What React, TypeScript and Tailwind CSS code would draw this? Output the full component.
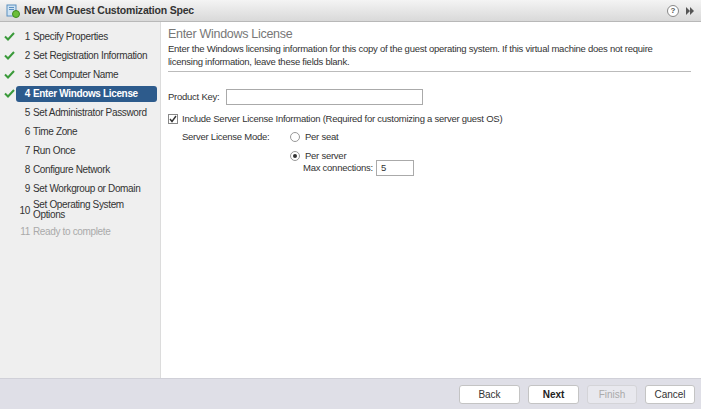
import React from "react";

const steps = [
  { n: "1", label: "Specify Properties", done: true },
  { n: "2", label: "Set Registration Information", done: true },
  { n: "3", label: "Set Computer Name", done: true },
  { n: "4", label: "Enter Windows License", done: true, active: true },
  { n: "5", label: "Set Administrator Password" },
  { n: "6", label: "Time Zone" },
  { n: "7", label: "Run Once" },
  { n: "8", label: "Configure Network" },
  { n: "9", label: "Set Workgroup or Domain" },
  { n: "10", label: "Set Operating System Options", two: true },
  { n: "11", label: "Ready to complete", disabled: true },
];

function Check() {
  return (
    <svg width="11" height="9" viewBox="0 0 11 9">
      <path d="M1 4.5 L4 7.5 L10 1" fill="none" stroke="#3a9a3a" strokeWidth="2" />
    </svg>
  );
}

export default function App() {
  return (
    <div className="w-[701px] h-[409px] flex flex-col overflow-hidden text-[#333]" style={{ fontFamily: '"Liberation Sans", Arial, sans-serif' }}>
      {/* title bar */}
      <div className="h-[22px] shrink-0 flex items-center justify-between pl-[6px] pr-[6px] bg-gradient-to-b from-[#f4f4f4] to-[#d9d9d9] border-b border-[#b8b8b8]">
        <div className="flex items-center gap-[4px]">
          <svg width="14" height="14" viewBox="0 0 14 14">
            <rect x="1" y="1" width="9" height="11" fill="#cfe3f3" stroke="#5b8fc0" />
            <rect x="3" y="3" width="5" height="1" fill="#5b8fc0" />
            <rect x="3" y="5" width="5" height="1" fill="#5b8fc0" />
            <circle cx="10" cy="10" r="3.5" fill="#6cbf3a" stroke="#3f8a1f" />
          </svg>
          <span className="text-[10.5px] font-bold text-[#333] tracking-[-0.2px]">New VM Guest Customization Spec</span>
        </div>
        <div className="flex items-center gap-[6px]">
          <div className="w-[12px] h-[12px] rounded-full border border-[#888] bg-white flex items-center justify-center text-[8px] font-bold text-[#555] leading-none">?</div>
          <svg width="10" height="8" viewBox="0 0 10 8">
            <path d="M1 0 L5 4 L1 8 Z M5 0 L9 4 L5 8 Z" fill="#555" />
          </svg>
        </div>
      </div>

      <div className="flex flex-1 min-h-0">
        {/* sidebar */}
        <div className="w-[161px] shrink-0 bg-[#efefef] border-r border-[#dcdcdc] pt-[5px] pl-[3px] pr-[3px] text-[10px] tracking-[-0.35px]">
          {steps.map((s) => (
            <div key={s.n} className={`flex items-center ${s.two ? "h-[24px]" : "h-[19px]"}`}>
              <div className="w-[13px] flex justify-center shrink-0">{s.done ? <Check /> : null}</div>
              <div
                className={`flex items-center flex-1 rounded-[3px] ${s.two ? "h-[24px]" : "h-[16px]"} ${s.two ? "pl-[1px]" : "pl-[4px]"} ${s.active ? "bg-[#2d5b8c] text-white font-bold" : s.disabled ? "text-[#aaa]" : "text-[#333]"}`}
              >
                <span className={`${s.two ? "w-[13px]" : "w-[10px]"} shrink-0 text-right mr-[3px]`}>{s.n}</span>
                <span className="leading-[10px]">{s.two ? <>Set Operating System<br />Options</> : s.label}</span>
              </div>
            </div>
          ))}
        </div>

        {/* content */}
        <div className="flex-1 bg-white pl-[7px] pr-[10px] pt-[5px] text-[9.5px] tracking-[-0.25px]">
          <div className="text-[12.5px] text-[#777] tracking-[-0.3px] leading-[15px]">Enter Windows License</div>
          <div className="leading-[13px] text-[#333] pb-[3px] border-b border-[#bbb]">
            Enter the Windows licensing information for this copy of the guest operating system. If this virtual machine does not require
            <br />
            licensing information, leave these fields blank.
          </div>
          <div className="flex items-center mt-[17px]">
            <span className="w-[58px]">Product Key:</span>
            <div className="w-[197px] h-[16px] border border-[#aaa] bg-white" />
          </div>
          <div className="flex items-center mt-[7px]">
            <div className="w-[10px] h-[10px] border border-[#888] bg-white flex items-center justify-center mr-[4px]">
              <svg width="8" height="8" viewBox="0 0 8 8">
                <path d="M1 4 L3 6.5 L7 1" fill="none" stroke="#333" strokeWidth="1.4" />
              </svg>
            </div>
            <span>Include Server License Information (Required for customizing a server guest OS)</span>
          </div>
          <div className="flex mt-[4px] pl-[14px]">
            <span className="w-[108px] leading-[13px]">Server License Mode:</span>
            <div className="flex flex-col">
              <div className="flex items-center h-[13px]">
                <div className="w-[10px] h-[10px] rounded-full border border-[#999] bg-white mr-[5px]" />
                <span>Per seat</span>
              </div>
              <div className="flex items-center h-[13px] mt-[6px]">
                <div className="w-[10px] h-[10px] rounded-full border border-[#999] bg-white mr-[5px] flex items-center justify-center">
                  <div className="w-[4px] h-[4px] rounded-full bg-[#333]" />
                </div>
                <span>Per server</span>
              </div>
              <div className="flex items-center pl-[13px] mt-[-2px]">
                <span className="mr-[3px]">Max connections:</span>
                <div className="w-[38px] h-[16px] border border-[#aaa] bg-white flex items-center pl-[4px]">5</div>
              </div>
            </div>
          </div>
        </div>
      </div>

      {/* footer */}
      <div className="h-[31px] shrink-0 bg-[#dfdfe7] border-t border-[#d0d0d8] flex items-center justify-end pr-[6px] gap-[8px] text-[10px]">
        <button className="w-[61px] h-[19px] rounded-[3px] border border-[#c4c4c4] bg-white text-[#333]">Back</button>
        <button className="w-[51px] h-[19px] rounded-[3px] border border-[#c4c4c4] bg-white text-[#222] font-bold">Next</button>
        <button className="w-[50px] h-[19px] rounded-[3px] border border-[#d4d4d8] bg-[#e8e8ee] text-[#aaa]">Finish</button>
        <button className="w-[50px] h-[19px] rounded-[3px] border border-[#c4c4c4] bg-white text-[#333]">Cancel</button>
      </div>
    </div>
  );
}
